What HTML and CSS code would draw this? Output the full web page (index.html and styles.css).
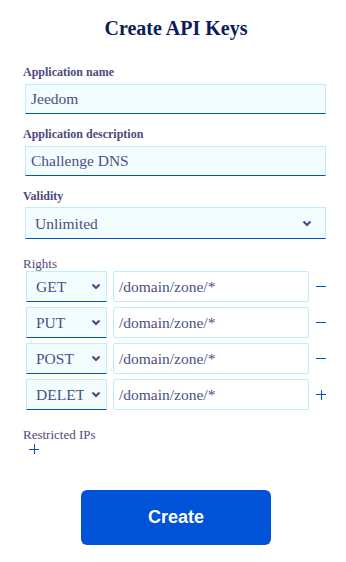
FILE: index.html
```html
<!DOCTYPE html>
<html lang="en">
<head>
  <meta charset="UTF-8" />
  <meta name="viewport" content="width=device-width, initial-scale=1.0"/>
  <title>Create API Keys</title>
  <link rel="stylesheet" href="styles.css">
</head>
<body>
  <div class="page">
    <h1>Create API Keys</h1>

    <form class="key-form" autocomplete="off">
      <div class="field">
        <label>Application name</label>
        <input type="text" class="text-input" value="Jeedom" />
      </div>

      <div class="field">
        <label>Application description</label>
        <input type="text" class="text-input" value="Challenge DNS" />
      </div>

      <div class="field">
        <label>Validity</label>
        <select class="text-input validity">
          <option>Unlimited</option>
        </select>
      </div>

      <div class="rights">
        <span class="sub-label">Rights</span>
        <div class="right-row">
          <select class="method"><option>GET</option></select>
          <input type="text" class="path" value="/domain/zone/*" />
          <span class="row-btn minus"></span>
        </div>
        <div class="right-row">
          <select class="method"><option>PUT</option></select>
          <input type="text" class="path" value="/domain/zone/*" />
          <span class="row-btn minus"></span>
        </div>
        <div class="right-row">
          <select class="method"><option>POST</option></select>
          <input type="text" class="path" value="/domain/zone/*" />
          <span class="row-btn minus"></span>
        </div>
        <div class="right-row">
          <select class="method"><option>DELETE</option></select>
          <input type="text" class="path" value="/domain/zone/*" />
          <span class="row-btn plus"></span>
        </div>
      </div>

      <div class="ips">
        <span class="sub-label">Restricted IPs</span>
        <span class="row-btn plus add-ip"></span>
      </div>

      <button type="button" class="create-btn">Create</button>
    </form>
  </div>
</body>
</html>
```

FILE: styles.css
```css
:root {
  --navy: #0d1b57;
  --label: #4d4b7d;
  --text: #4a4f86;
  --blue: #0050d6;
  --cyan-border: #bfeefb;
  --field-bg: #f3fdff;
}

html, body {
  margin: 0;
  padding: 0;
  background: #fff;
  font-family: "Liberation Serif", "Times New Roman", serif;
}

.page {
  padding: 16px 20px 0 23px;
}

h1 {
  margin: 0;
  text-align: center;
  color: var(--navy);
  font-size: 20px;
  line-height: 24px;
  font-weight: 700;
  padding-left: 3px;
}

.key-form {
  display: flex;
  flex-direction: column;
  margin-top: 25px;
}

.field {
  display: flex;
  flex-direction: column;
  gap: 5px;
  margin-bottom: 13px;
}

.field label {
  color: var(--label);
  font-size: 12px;
  line-height: 14px;
  font-weight: 700;
}

.text-input {
  margin-left: 2px;
  height: 30px;
  box-sizing: border-box;
  border: 1px solid var(--cyan-border);
  border-bottom: 1px solid var(--blue);
  border-radius: 0;
  background: var(--field-bg);
  color: var(--text);
  font-family: inherit;
  font-size: 15.5px;
  padding: 0 5px;
  outline: none;
}

.validity {
  height: 32px;
  appearance: none;
  -webkit-appearance: none;
  padding-left: 9px;
  background: var(--field-bg) url("data:image/svg+xml,%3Csvg xmlns='http://www.w3.org/2000/svg' width='10' height='7' viewBox='0 0 10 7'%3E%3Cpath d='M1.5 1.5 L5 5 L8.5 1.5' fill='none' stroke='%234a4f86' stroke-width='2.2'/%3E%3C/svg%3E") no-repeat right 13px center;
}

.field:nth-child(3) {
  gap: 4px;
  margin-bottom: 18px;
}

.sub-label {
  display: block;
  color: var(--label);
  font-size: 13px;
  line-height: 14px;
}

.rights {
  display: flex;
  flex-direction: column;
  gap: 5px;
}

.rights .sub-label {
  margin-bottom: -5px;
}

.right-row {
  display: flex;
  align-items: center;
  margin-left: 3px;
}

.method {
  width: 81px;
  height: 31px;
  box-sizing: border-box;
  appearance: none;
  -webkit-appearance: none;
  border: 1px solid var(--cyan-border);
  border-bottom: 1px solid var(--blue);
  border-radius: 0;
  background: var(--field-bg) url("data:image/svg+xml,%3Csvg xmlns='http://www.w3.org/2000/svg' width='10' height='7' viewBox='0 0 10 7'%3E%3Cpath d='M1.5 1.5 L5 5 L8.5 1.5' fill='none' stroke='%234a4f86' stroke-width='2.2'/%3E%3C/svg%3E") no-repeat right 5px center;
  color: var(--text);
  font-family: inherit;
  font-size: 15.5px;
  padding: 0 22px 0 9px;
  outline: none;
}

.path {
  width: 196px;
  height: 31px;
  box-sizing: border-box;
  margin-left: 6px;
  border: 1px solid var(--cyan-border);
  border-radius: 2px;
  background: #fff;
  color: var(--text);
  font-family: inherit;
  font-size: 15.5px;
  padding: 0 5px;
  outline: none;
}

.row-btn {
  position: relative;
  display: inline-block;
  width: 10px;
  height: 10px;
  margin-left: 7px;
  cursor: pointer;
}

.row-btn::before,
.plus::after {
  content: "";
  position: absolute;
  background: var(--blue);
}

.row-btn::before {
  left: 0;
  top: 4.5px;
  width: 10px;
  height: 1px;
}

.plus::after {
  left: 4.5px;
  top: 0;
  width: 1px;
  height: 10px;
}

.ips {
  margin-top: 18px;
  display: flex;
  flex-direction: column;
}

.add-ip {
  margin: 2px 0 0 6px;
}

.create-btn {
  align-self: center;
  margin: 36px 0 0 3px;
  width: 190px;
  height: 55px;
  border: none;
  border-radius: 6px;
  background: #0052d6;
  color: #fff;
  font-family: "Liberation Sans", Arial, sans-serif;
  font-size: 18px;
  font-weight: 700;
  cursor: pointer;
}
```
